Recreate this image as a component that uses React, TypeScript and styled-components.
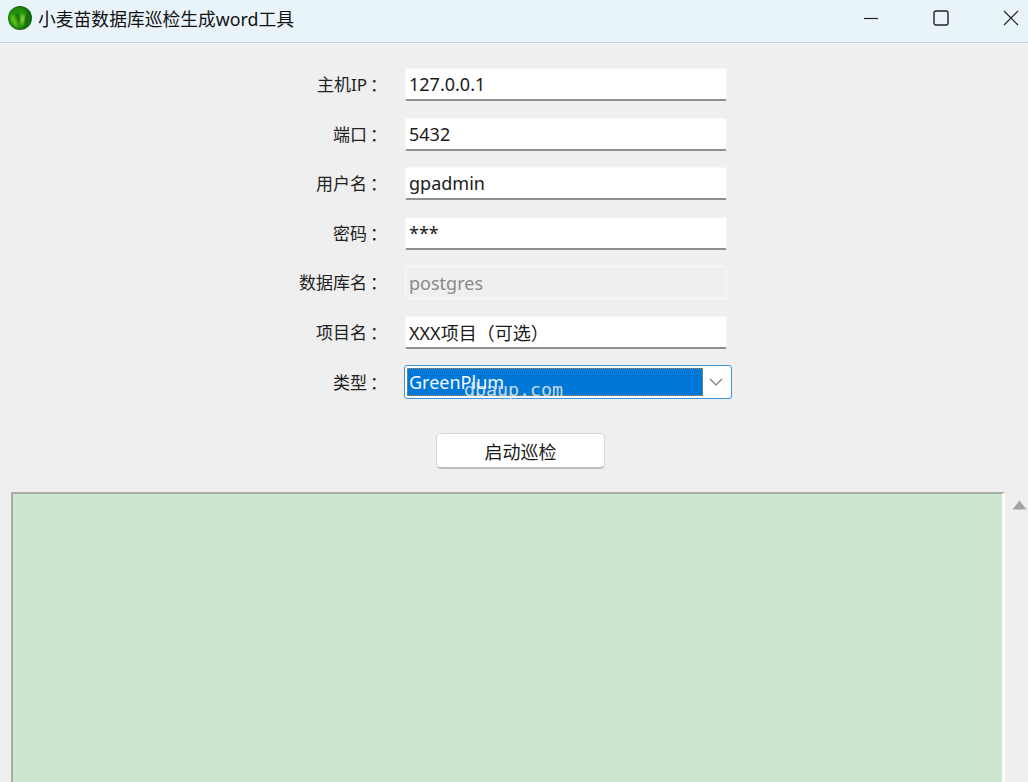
import { Fragment } from 'react';
import styled, { createGlobalStyle } from 'styled-components';

const GlobalStyle = createGlobalStyle`
  html, body {
    margin: 0;
    padding: 0;
    height: 100%;
    overflow: hidden;
    background: #efefef;
  }
  * {
    box-sizing: border-box;
  }
`;

const Window = styled.div`
  height: 782px;
  overflow: hidden;
  display: flex;
  flex-direction: column;
  background: #efefef;
  color: #1a1a1a;
  font-family: "Noto Sans", "Noto Sans CJK SC", sans-serif;
`;

const TitleBar = styled.div`
  flex: none;
  height: 43px;
  display: flex;
  align-items: center;
  padding: 0 0 6px 8px;
  background: #e9f4fa;
  border-bottom: 1px solid #cdcfd0;
`;

const AppTitle = styled.span`
  margin-left: 6px;
  font-size: 17.8px;
  color: #111;
  white-space: nowrap;
`;

const WindowButtons = styled.div`
  margin-left: auto;
  display: flex;
  gap: 36px;
  height: 100%;
`;

const WindowButton = styled.div`
  width: 34px;
  height: 100%;
  display: flex;
  align-items: center;
  justify-content: center;
  color: #222;
`;

const Form = styled.div`
  flex: none;
  display: grid;
  grid-template-columns: 387px 322px;
  column-gap: 18px;
  row-gap: 16.5px;
  align-items: center;
  padding-top: 25px;
`;

const Label = styled.label`
  justify-self: end;
  font-size: 17px;
  line-height: 33px;
  color: #222;
`;

const Colon = styled.span`
  margin-left: 3px;
`;

const Field = styled.div<{ $disabled?: boolean }>`
  height: 33px;
  display: flex;
  align-items: center;
  padding-left: 3px;
  font-size: 18px;
  white-space: nowrap;
  color: ${p => (p.$disabled ? '#8a8a8a' : '#1a1a1a')};
  background: ${p => (p.$disabled ? '#efefef' : '#fff')};
  border: 1px solid ${p => (p.$disabled ? '#f8f8f8' : '#f6f6f6')};
  border-bottom: ${p => (p.$disabled ? '1px solid #f8f8f8' : '2px solid #8f8f8f')};
  border-radius: 2px;
`;

const ComboBox = styled.div`
  position: relative;
  width: 328px;
  height: 34px;
  margin-left: -1px;
  display: flex;
  align-items: stretch;
  padding: 2px;
  background: #fff;
  border: 1px solid #3d94dc;
  border-radius: 3px;
`;

const ComboValue = styled.div`
  flex: 1;
  display: flex;
  align-items: center;
  padding-left: 2px;
  font-size: 18px;
  color: #f2f8fd;
  background: #0078d7;
  outline: 1px dotted #c98a3a;
  outline-offset: -1px;
`;

const ComboArrow = styled.div`
  flex: none;
  width: 26px;
  display: flex;
  align-items: center;
  justify-content: center;
  color: #777;
`;

const Watermark = styled.span`
  position: absolute;
  left: 59px;
  top: 13px;
  font-family: "DejaVu Sans Mono", monospace;
  font-size: 18.3px;
  line-height: 22px;
  color: rgba(235, 235, 235, 0.85);
  white-space: nowrap;
`;

const Actions = styled.div`
  flex: none;
  display: flex;
  padding: 34px 0 23px 436px;
`;

const StartButton = styled.button`
  width: 169px;
  height: 36px;
  padding: 0;
  font-family: inherit;
  font-size: 18px;
  color: #1a1a1a;
  background: #fff;
  border: 1px solid #d6d6d6;
  border-bottom: 2px solid #bdbdbd;
  border-radius: 5px;
`;

const LogArea = styled.div`
  flex: none;
  display: flex;
  padding-left: 11px;
`;

const LogBox = styled.div`
  width: 994px;
  height: 330px;
  background: #cde6d0;
  border: 2px solid #a9aca9;
  border-right: 3px solid #fff;
  border-bottom: none;
`;

const ScrollUp = styled.div`
  flex: none;
  width: 23px;
  padding: 8px 0 0 7px;
  color: #a3a3a3;

  svg {
    display: block;
  }
`;

function AppIcon() {
  return (
    <svg width="24" height="24" viewBox="0 0 24 24">
      <defs>
        <radialGradient id="leaf" cx="45%" cy="50%" r="55%">
          <stop offset="0%" stopColor="#3fae14" />
          <stop offset="70%" stopColor="#1f8a0c" />
          <stop offset="100%" stopColor="#0b5a0b" />
        </radialGradient>
        <filter id="soft">
          <feGaussianBlur stdDeviation="1" />
        </filter>
        <clipPath id="disc">
          <circle cx="12" cy="12" r="12" />
        </clipPath>
      </defs>
      <circle cx="12" cy="12" r="12" fill="url(#leaf)" />
      <g clipPath="url(#disc)">
        <g filter="url(#soft)">
          <path d="M3 8c3 2 5 7 7 13-5-1-8-7-7-13z" fill="#62c81f" />
          <path d="M8 5c3 3 5 8 5 14-3-3-6-8-5-14z" fill="#0c6409" />
          <path d="M15 8c2 3 1 8-2 12 0-5-1-8 2-12z" fill="#8ee03a" />
          <path d="M20 5c2 5 1 11-4 16 1-6 1-11 4-16z" fill="#0d600b" />
        </g>
      </g>
    </svg>
  );
}

const fields = [
  { label: '主机IP', value: '127.0.0.1' },
  { label: '端口', value: '5432' },
  { label: '用户名', value: 'gpadmin' },
  { label: '密码', value: '***' },
  { label: '数据库名', value: 'postgres', disabled: true },
  { label: '项目名', value: 'XXX项目（可选）' },
];

export default function App() {
  return (
    <Window>
      <GlobalStyle />
      <TitleBar>
        <AppIcon />
        <AppTitle>小麦苗数据库巡检生成word工具</AppTitle>
        <WindowButtons>
          <WindowButton>
            <svg width="16" height="16" viewBox="0 0 16 16">
              <path d="M1 8.5h14" stroke="currentColor" strokeWidth="1.2" />
            </svg>
          </WindowButton>
          <WindowButton>
            <svg width="16" height="16" viewBox="0 0 16 16">
              <rect x="1" y="1" width="14" height="14" rx="2" fill="none" stroke="currentColor" strokeWidth="1.4" />
            </svg>
          </WindowButton>
          <WindowButton>
            <svg width="16" height="16" viewBox="0 0 16 16">
              <path d="M1 1l14 14M15 1L1 15" stroke="currentColor" strokeWidth="1.2" />
            </svg>
          </WindowButton>
        </WindowButtons>
      </TitleBar>
      <Form>
        {fields.map(f => (
          <Fragment key={f.label}>
            <Label>{f.label}<Colon>：</Colon></Label>
            <Field $disabled={f.disabled}>{f.value}</Field>
          </Fragment>
        ))}
        <Label>类型<Colon>：</Colon></Label>
        <ComboBox>
          <ComboValue>GreenPlum</ComboValue>
          <ComboArrow>
            <svg width="14" height="8" viewBox="0 0 14 8">
              <path d="M1 1l6 6 6-6" fill="none" stroke="currentColor" strokeWidth="1.2" />
            </svg>
          </ComboArrow>
          <Watermark>dbaup.com</Watermark>
        </ComboBox>
      </Form>
      <Actions>
        <StartButton>启动巡检</StartButton>
      </Actions>
      <LogArea>
        <LogBox />
        <ScrollUp>
          <svg width="15" height="10" viewBox="0 0 15 10">
            <path d="M7.5 0.5L14.5 9.5H0.5z" fill="currentColor" />
          </svg>
        </ScrollUp>
      </LogArea>
    </Window>
  );
}
